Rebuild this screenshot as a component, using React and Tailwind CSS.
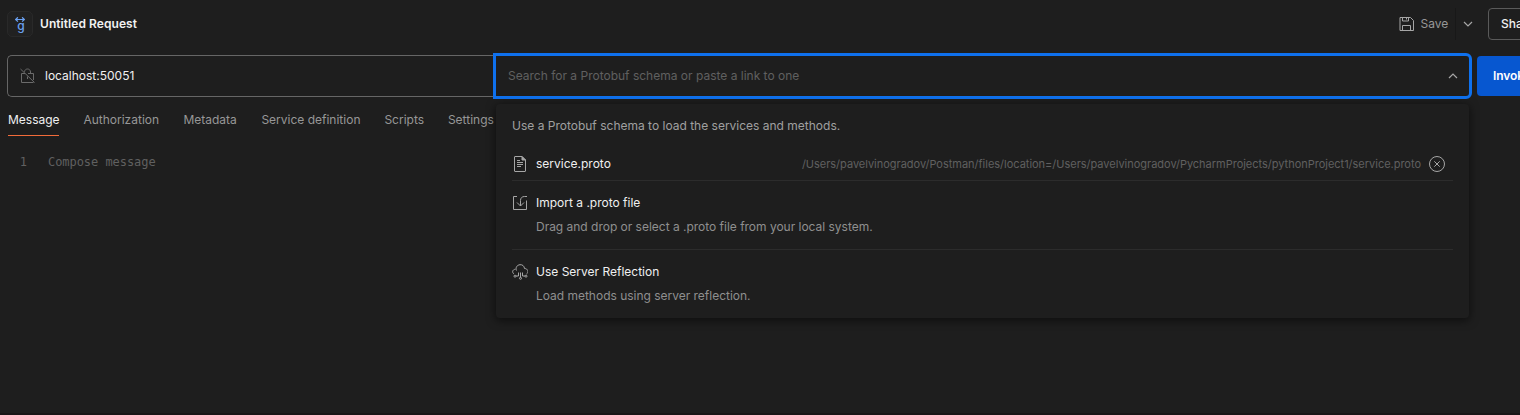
const TABS = [
  { name: "Message", gap: "mr-6", width: "w-[51px]" },
  { name: "Authorization", gap: "mr-6", width: "w-[76px]" },
  { name: "Metadata", gap: "mr-6", width: "w-[54px]" },
  { name: "Service definition", gap: "mr-6", width: "w-[99px]" },
  { name: "Scripts", gap: "mr-6", width: "w-[39.500px]" },
  { name: "Settings", gap: "", width: "w-[47px]" },
];

const stroke = { fill: "none", stroke: "currentColor", strokeWidth: 1 };

function GrpcIcon() {
  return (
    <div className="flex h-[26px] w-[26px] shrink-0 flex-col items-center rounded-[5px] border border-[#292929] bg-[#212121] pt-[5px] text-[#6ba1f2]">
      <svg width="10" height="6" viewBox="0 0 10 6" {...stroke} strokeWidth="1.200" className="shrink-0">
        <path d="M.7 2.500h8.600M2.900.300L.700 2.500l2.200 2.200M7.100.300L9.300 2.500 7.100 4.700" />
      </svg>
      <span className="-mt-[3px] ml-[2px] h-[12px] text-[12px] font-medium leading-[12px]">g</span>
    </div>
  );
}

function LockOffIcon() {
  return (
    <svg width="16" height="16" viewBox="0 0 16 16" {...stroke} className="shrink-0 text-[#6b6b6b]">
      <path d="M5 5.500H1.500v9h12M8 5.500h5.500v6.500M4.500 3.800C4.700 2 6 1 7.500 1c1.700 0 3 1.200 3 3v1.500M7.500 8.500v2.500M.500 1l14 13.500" />
    </svg>
  );
}

function SaveIcon() {
  return (
    <svg width="16" height="16" viewBox="0 0 16 16" {...stroke} className="shrink-0 text-[#a6a6a6]">
      <path d="M1 1.500h10.500l3 3v10H1zM3.500 1.500v3.500h6V1.500M7.500 2v1.500M3.500 14.500v-5h8v5" />
    </svg>
  );
}

function Chevron({ up }) {
  return (
    <svg width="10" height="6" viewBox="0 0 10 6" {...stroke} strokeWidth="1.200" className="shrink-0 text-[#a6a6a6]">
      <path d={up ? "M1 5l4-4 4 4" : "M1 1l4 4 4-4"} />
    </svg>
  );
}

function FileIcon() {
  return (
    <svg width="16" height="16" viewBox="0 0 16 16" {...stroke} className="shrink-0 text-[#a6a6a6]">
      <path d="M10 .500H3a.500.500 0 0 0-.500.500v14a.500.500 0 0 0 .500.500h10a.500.500 0 0 0 .500-.500V4zM5 4.500h3M5 6.500h6M5 8.500h6M5 10.500h4" />
      <path d="M10 .500v3.500h3.500z" fill="currentColor" />
    </svg>
  );
}

function ImportIcon() {
  return (
    <svg width="16" height="16" viewBox="0 0 16 16" {...stroke} className="shrink-0 text-[#a6a6a6]">
      <path d="M5 1.500H1.500v13h13v-9M15 1.500h-2.500c-2.500 0-4 1.500-4 4v5.500M5 7.500l3.500 3.500L12 7.500" />
    </svg>
  );
}

function CloudIcon() {
  return (
    <svg width="16" height="16" viewBox="0 0 16 16" {...stroke} className="shrink-0 text-[#a6a6a6]">
      <path d="M2 10C-.200 8.500.300 5.500 3.500 5.200M4.500 6.500c-1.200-3 .500-5.500 3.500-5.800 2.500-.200 4.200 1.300 4.500 3.800 3.500 0 4.500 4 2 5.500M6.500 8.500v3.500H4M8.500 8.500v5M10.500 8.500v3.500h2.500" />
      <circle cx="3" cy="12.200" r="1" />
      <circle cx="8.500" cy="14.300" r="1" />
      <circle cx="14" cy="12.200" r="1" />
    </svg>
  );
}

function CloseIcon() {
  return (
    <svg width="16" height="16" viewBox="0 0 16 16" {...stroke} className="shrink-0 text-[#a6a6a6]">
      <circle cx="8" cy="8" r="7.500" />
      <path d="M5.300 5.300l5.400 5.400M10.700 5.300l-5.400 5.400" />
    </svg>
  );
}

function Option({ icon, title, text, last }) {
  return (
    <div className={last ? "h-[68px] pt-[14px]" : "h-[69px] border-b border-[#2c2c2c] pt-[14px]"}>
      <div className="flex h-4 items-center gap-2 text-[#f0f0f0]">
        {icon}
        <span>{title}</span>
      </div>
      <div className="mt-2 pl-6 leading-4 tracking-[-0.015px] text-[#8f8f8f]">{text}</div>
    </div>
  );
}

function SchemaMenu() {
  return (
    <div className="absolute left-0 top-[48px] h-[214px] w-[973px] rounded-[4px] bg-[#1e1e1e] px-4 shadow-[0_2px_9px_1px_rgba(0,0,0,0.5)]">
      <div className="pt-[14px] leading-4 text-[#a0a0a0]">Use a Protobuf schema to load the services and methods.</div>
      <div className="mt-[14px] flex h-[33px] items-center border-b border-[#2c2c2c] pr-2 text-[#f0f0f0]">
        <FileIcon />
        <span className="ml-2">service.proto</span>
        <span className="ml-auto mr-2 text-[11px] tracking-[-0.015px] text-[#606060]">
          /Users/pavelvinogradov/Postman/files/location=/Users/pavelvinogradov/PycharmProjects/pythonProject1/service.proto
        </span>
        <CloseIcon />
      </div>
      <Option icon={<ImportIcon />} title="Import a .proto file" text="Drag and drop or select a .proto file from your local system." />
      <Option icon={<CloudIcon />} title="Use Server Reflection" text="Load methods using server reflection." last />
    </div>
  );
}

export default function App() {
  return (
    <div className="flex h-[415px] w-[1520px] flex-col overflow-hidden whitespace-nowrap border-b-2 border-[#191617] bg-[#1e1e1e] font-['Inter',sans-serif] text-[12px] text-[#a0a0a0]">
      <header className="flex h-[54px] shrink-0 items-center pb-[6px] pl-[7px]">
        <GrpcIcon />
        <h1 className="ml-[7px] font-semibold tracking-[0.060px] text-[#f2f2f2]">Untitled Request</h1>
        <div className="ml-auto flex w-[121px] shrink-0 items-center">
          <SaveIcon />
          <span className="ml-[5px] w-[35px] shrink-0 pl-[0.500px] text-[#979797]">Save</span>
          <div className="h-8 w-px shrink-0 bg-[#181818]" />
          <div className="flex w-[32px] shrink-0 pl-[7px]"><Chevron /></div>
          <button className="h-8 w-[60px] shrink-0 rounded-[4px] border border-[#5a5a5a] pl-3 text-left font-medium text-[#f0f0f0]">Share</button>
        </div>
      </header>
      <div className="flex h-[44px] shrink-0 items-center pl-[7px]">
        <div className="flex h-[42px] w-[486px] shrink-0 items-center rounded-l-[5px] border border-r-0 border-[#666] pl-3 text-[#f0f0f0]">
          <LockOffIcon />
          <span className="ml-[9px]">localhost:50051</span>
        </div>
        <div className="relative h-[46px] w-[979px] shrink-0 rounded-r-[6px] border-[3px] border-[#0f71ee]">
          <div className="flex h-full items-center justify-between pl-3 pr-[11px] text-[#606060]">
            <span>Search for a Protobuf schema or paste a link to one</span>
            <Chevron up />
          </div>
          <SchemaMenu />
        </div>
        <button className="ml-[5px] h-10 w-20 shrink-0 rounded-[4px] bg-[#0757d0] pl-4 text-left font-semibold tracking-[-0.100px] text-white">Invoke</button>
      </div>
      <nav className="flex h-[38px] shrink-0 pl-2">
        {TABS.map((tab, i) => (
          <div
            key={tab.name}
            className={`${tab.gap} ${tab.width} shrink-0 pt-[14px] leading-4 ${i === 0 ? "border-b border-[#f26b3a] text-[#f0f0f0]" : "pl-[0.400px] text-[#979797]"}`}
          >
            {tab.name}
          </div>
        ))}
      </nav>
      <div className="flex pt-[17px] font-['DejaVu_Sans_Mono',monospace] leading-[18px] tracking-[-0.050px] text-[#606060]">
        <span className="w-7 pr-px text-right">1</span>
        <span className="ml-5">Compose message</span>
      </div>
    </div>
  );
}
